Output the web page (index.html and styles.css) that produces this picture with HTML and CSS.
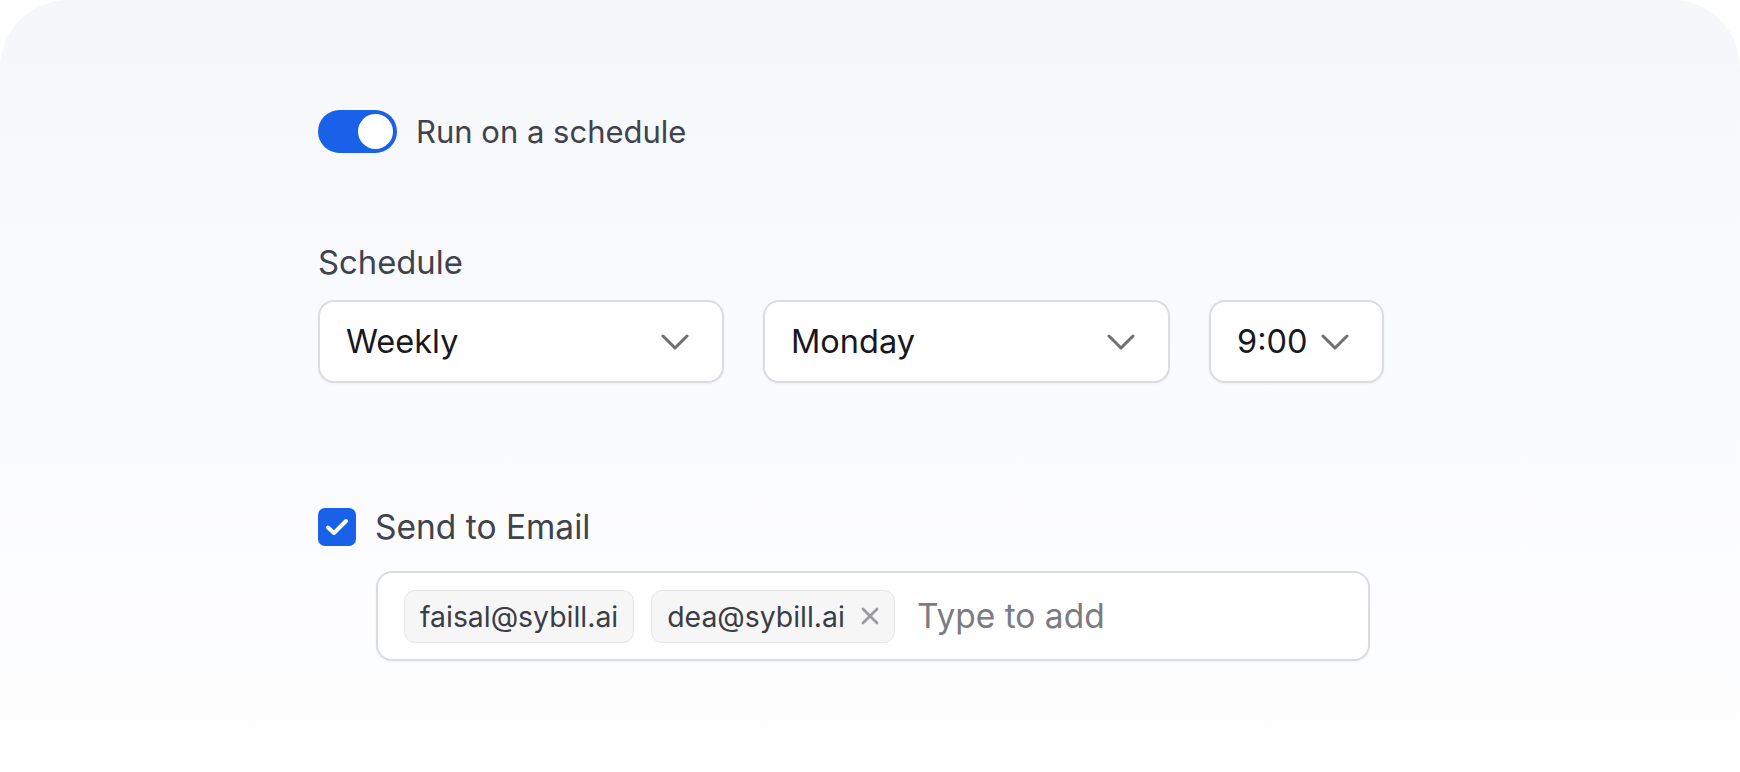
FILE: index.html
```html
<!DOCTYPE html>
<html lang="en">
<head>
<meta charset="utf-8">
<title>Schedule</title>
<link rel="stylesheet" href="styles.css">
</head>
<body>
<div class="panel">
  <div class="form">
    <div class="toggle-row">
      <span class="toggle"><span class="knob"></span></span>
      <span class="row-label">Run on a schedule</span>
    </div>

    <div class="field">
      <div class="field-label">Schedule</div>
      <div class="selects">
        <div class="select select-freq">
          <span class="select-value">Weekly</span>
          <svg class="chev" width="28" height="16" viewBox="0 0 28 16"><path d="M2 2 L14 14 L26 2" fill="none" stroke="#6e6e73" stroke-width="3" stroke-linecap="round" stroke-linejoin="round"/></svg>
        </div>
        <div class="select select-day">
          <span class="select-value">Monday</span>
          <svg class="chev" width="28" height="16" viewBox="0 0 28 16"><path d="M2 2 L14 14 L26 2" fill="none" stroke="#6e6e73" stroke-width="3" stroke-linecap="round" stroke-linejoin="round"/></svg>
        </div>
        <div class="select select-time">
          <span class="select-value">9:00</span>
          <svg class="chev" width="28" height="16" viewBox="0 0 28 16"><path d="M2 2 L14 14 L26 2" fill="none" stroke="#6e6e73" stroke-width="3" stroke-linecap="round" stroke-linejoin="round"/></svg>
        </div>
      </div>
    </div>

    <div class="email-section">
      <div class="check-row">
        <span class="checkbox">
          <svg width="38" height="38" viewBox="0 0 38 38"><path d="M10 19.5 L16 25 L28 13" fill="none" stroke="#ffffff" stroke-width="4" stroke-linecap="round" stroke-linejoin="round"/></svg>
        </span>
        <span class="row-label row-label-lg">Send to Email</span>
      </div>
      <div class="tag-input">
        <span class="chip">faisal@sybill.ai</span>
        <span class="chip chip-removable">dea@sybill.ai
          <svg class="chip-x" width="18" height="18" viewBox="0 0 18 18"><path d="M2 2 L16 16 M16 2 L2 16" fill="none" stroke="#9b9ba0" stroke-width="2.8" stroke-linecap="round"/></svg>
        </span>
        <span class="placeholder">Type to add</span>
      </div>
    </div>
  </div>
</div>
</body>
</html>
```

FILE: styles.css
```css
* { box-sizing: border-box; }

html, body {
  margin: 0;
  padding: 0;
  background: #ffffff;
}

body {
  font-family: Inter, "Noto Sans", "Liberation Sans", sans-serif;
  width: 1740px;
  height: 772px;
  overflow: hidden;
}

.panel {
  width: 1740px;
  height: 772px;
  border-radius: 68px 68px 0 0;
  background: linear-gradient(180deg, #f6f7fa 0%, #fafbfd 55%, #fefeff 100%);
}

.form {
  padding: 110px 0 0 318px;
  display: flex;
  flex-direction: column;
}

.toggle-row {
  display: flex;
  align-items: center;
  gap: 19px;
  height: 43px;
}

.toggle {
  width: 79px;
  height: 43px;
  border-radius: 22px;
  background: #1861e8;
  display: flex;
  align-items: center;
  justify-content: flex-end;
  padding-right: 4px;
}

.knob {
  width: 35px;
  height: 35px;
  border-radius: 50%;
  background: #ffffff;
}

.row-label {
  font-size: 31px;
  line-height: 38px;
  color: #40424c;
}

.row-label-lg {
  font-size: 33.5px;
}

.field {
  margin-top: 90px;
  display: flex;
  flex-direction: column;
}

.field-label {
  font-size: 32.8px;
  line-height: 38px;
  color: #40424c;
}

.selects {
  margin-top: 19px;
  display: flex;
  gap: 39px;
}

.select {
  height: 83px;
  background: #ffffff;
  border: 2px solid #dcdce0;
  border-radius: 16px;
  box-shadow: 0 1px 2px rgba(20, 20, 40, 0.05);
  display: flex;
  align-items: center;
  justify-content: space-between;
  padding: 0 33px 0 26px;
}

.select-freq { width: 406px; }
.select-day { width: 407px; }
.select-time { width: 175px; }

.select-value {
  font-size: 32.5px;
  color: #18191e;
}

.chev { display: block; }

.email-section {
  margin-top: 125px;
  display: flex;
  flex-direction: column;
}

.check-row {
  display: flex;
  align-items: center;
  gap: 19px;
  height: 38px;
}

.checkbox {
  width: 38px;
  height: 38px;
  border-radius: 7px;
  background: #1861e8;
  display: block;
}

.checkbox svg { display: block; }

.tag-input {
  margin: 25px 0 0 58px;
  width: 994px;
  height: 90px;
  background: #ffffff;
  border: 2px solid #dcdce0;
  border-radius: 16px;
  box-shadow: 0 1px 2px rgba(20, 20, 40, 0.05);
  display: flex;
  align-items: center;
  padding: 0 26px;
  gap: 17px;
}

.chip {
  height: 53px;
  display: flex;
  align-items: center;
  gap: 16px;
  padding: 0 15px;
  background: #f6f6f7;
  border: 1.5px solid #e6e6e9;
  border-radius: 11px;
  font-size: 28.4px;
  color: #3b3d46;
}

.chip-removable { padding-right: 15px; }

.chip-x { display: block; }

.placeholder {
  margin-left: 5px;
  font-size: 33.5px;
  color: #7b7c82;
}
```
